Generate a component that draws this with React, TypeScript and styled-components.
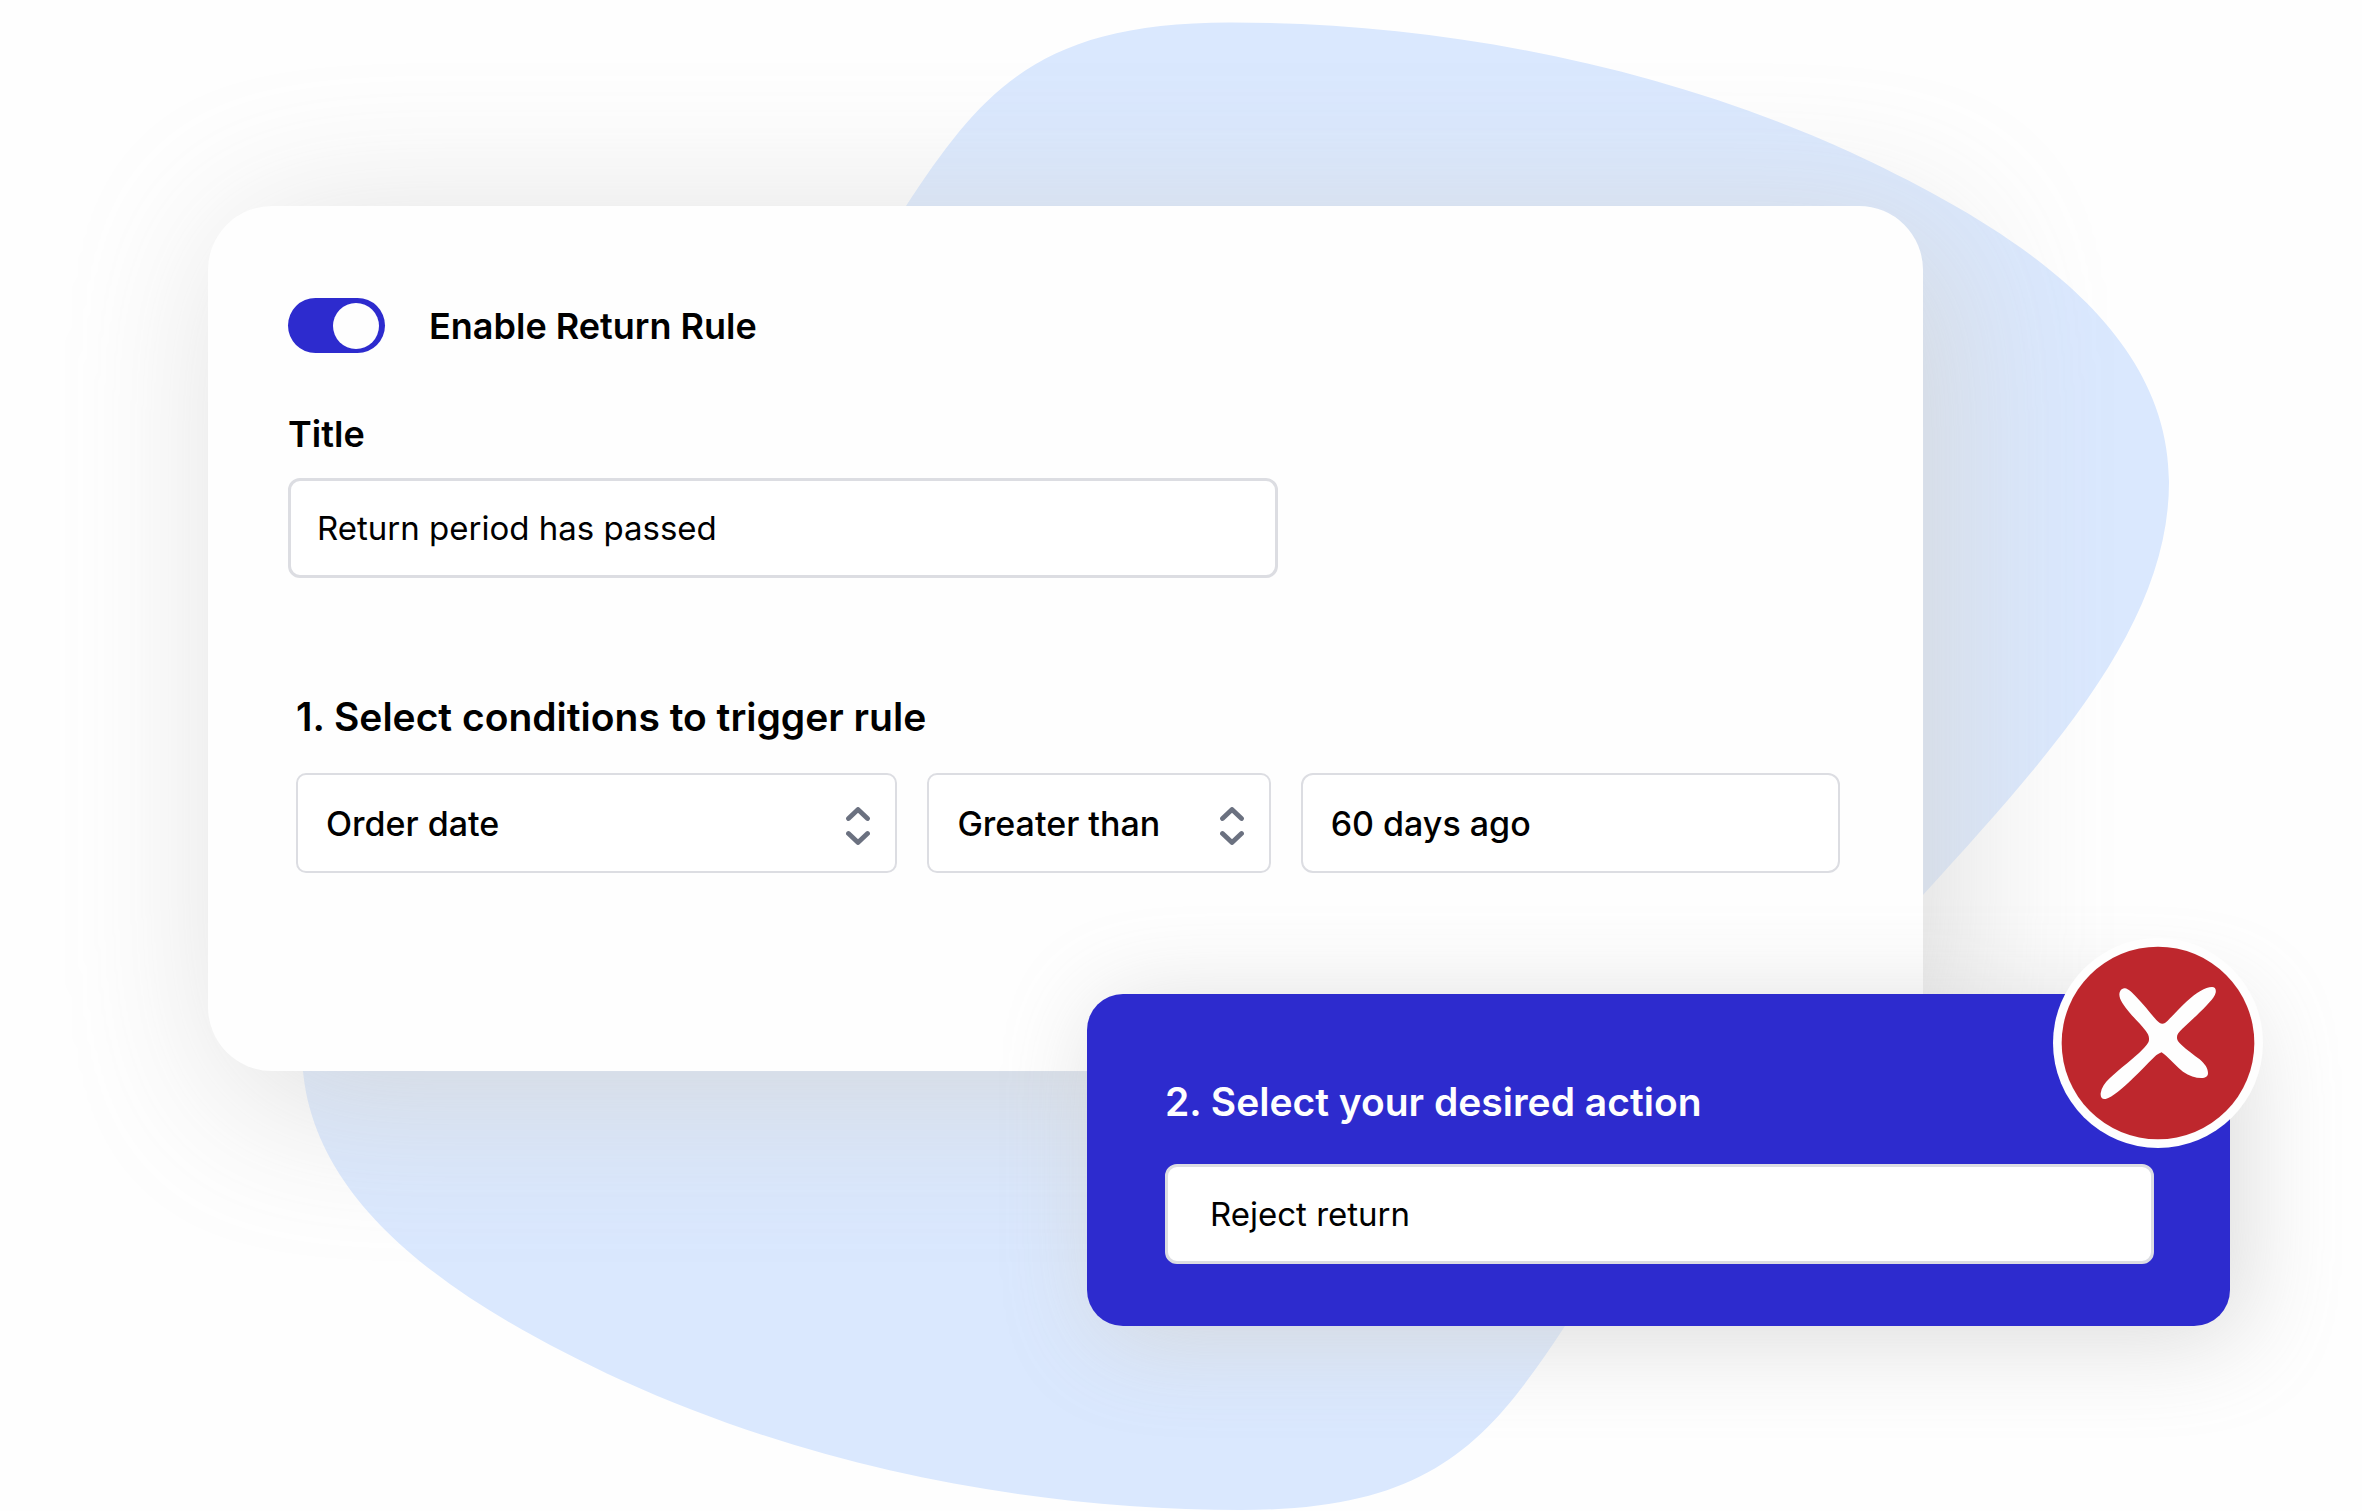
import React, { useId, useState } from "react";
import styled, { createGlobalStyle } from "styled-components";

const blue = "#2d2bce";
const line = "#dcdde2";
const shadow = "rgba(212, 212, 212, 0.82)";

const GlobalStyle = createGlobalStyle`
  *, *::before, *::after { box-sizing: border-box; }
  body {
    margin: 0;
    background: #fefefe;
    color: #000;
    font-family: Inter, "Liberation Sans", sans-serif;
  }
`;

const Page = styled.main`
  position: relative;
  min-height: 100vh;
  overflow: hidden;
  display: grid;
  grid-template-columns: minmax(0, 879fr) minmax(0, 836fr) minmax(0, 307fr);
  grid-template-rows: auto 77px auto;
  align-content: start;
  padding: 206px 132px 184px 208px;
`;

const Backdrop = styled.svg`
  position: absolute;
  inset: 0;
  width: 100%;
  height: 100%;
`;

const RuleCard = styled.section`
  position: relative;
  grid-area: 1 / 1 / 3 / 3;
  display: flex;
  flex-direction: column;
  padding: 92px 83px 198px 80px;
  border-radius: 64px;
  background: #fefefe;
  box-shadow: 24px 24px 160px ${shadow};
`;

const ActionCard = styled.section`
  position: relative;
  grid-area: 2 / 2 / 4 / 4;
  display: flex;
  flex-direction: column;
  gap: 38px;
  padding: 84px 76px 62px 78px;
  border-radius: 36px;
  background: ${blue};
  box-shadow: 12px 12px 96px ${shadow};
`;

const ToggleRow = styled.label`
  display: flex;
  align-items: center;
  gap: 44px;
  font-size: 36px;
  line-height: 44px;
  font-weight: 600;
`;

const Switch = styled.input`
  appearance: none;
  position: relative;
  width: 97px;
  height: 55px;
  margin: 0;
  border-radius: 28px;
  background: #c9ccd4;

  &::before {
    content: "";
    position: absolute;
    top: 5px;
    left: 5px;
    width: 46px;
    height: 46px;
    border-radius: 50%;
    background: #fefefe;
  }

  &:checked {
    background: ${blue};
  }

  &:checked::before {
    left: 45px;
  }
`;

const TitleField = styled.div`
  display: flex;
  flex-direction: column;
  gap: 22px;
  max-width: 990px;
  margin-top: 59px;
`;

const FieldLabel = styled.label`
  font-size: 36px;
  line-height: 44px;
  font-weight: 600;
`;

const TextInput = styled.input<{ $inset: number; $strong?: boolean; $border?: number }>`
  width: 100%;
  min-width: 0;
  height: 100px;
  padding: 0 ${(p) => p.$inset}px;
  border: ${(p) => p.$border ?? 2}px solid ${line};
  border-radius: 12px;
  background: #fff;
  color: #000;
  font-family: inherit;
  font-size: ${(p) => (p.$strong ? 34 : 33)}px;
  font-weight: ${(p) => (p.$strong ? 500 : 400)};
`;

const Conditions = styled.div`
  display: flex;
  flex-direction: column;
  gap: 32px;
  margin-top: 115px;
  padding-left: 8px;
`;

const Heading = styled.h2<{ $light?: boolean }>`
  margin: 0;
  font-size: 39px;
  line-height: 48px;
  font-weight: 600;
  color: ${(p) => (p.$light ? "#fefefe" : "#000")};
`;

const ConditionRow = styled.div`
  display: grid;
  grid-template-columns: minmax(0, 601fr) minmax(0, 343fr) minmax(0, 539fr);
  gap: 30px;
`;

const SelectBox = styled.div`
  position: relative;
`;

const Select = styled.select`
  appearance: none;
  width: 100%;
  height: 100px;
  padding: 0 72px 0 28px;
  border: 2px solid ${line};
  border-radius: 10px;
  background: #fff;
  color: #000;
  font-family: inherit;
  font-size: 34px;
  font-weight: 500;
`;

const Chevrons = styled.svg`
  position: absolute;
  top: 34px;
  right: 27px;
  width: 24px;
  height: 38px;
  pointer-events: none;
`;

const Badge = styled.svg`
  position: absolute;
  top: -56px;
  right: -33px;
  width: 210px;
  height: 210px;
`;

function ConditionSelect({ label, options }: { label: string; options: string[] }) {
  return (
    <SelectBox>
      <Select aria-label={label} defaultValue={options[0]}>
        {options.map((o) => (
          <option key={o}>{o}</option>
        ))}
      </Select>
      <Chevrons viewBox="0 0 24 38" fill="none" stroke="#6b7180" strokeWidth="4.8" strokeLinecap="round" strokeLinejoin="round" aria-hidden="true">
        <path d="M2.5 11.5 12 2.5l9.5 9" />
        <path d="M2.5 26.5l9.5 9 9.5-9" />
      </Chevrons>
    </SelectBox>
  );
}

function RejectBadge() {
  return (
    <Badge viewBox="0 0 630 630" role="img" aria-label="Rejected">
      <circle cx="315" cy="315" r="315" fill="#fefefe" />
      <circle cx="315" cy="315" r="289" fill="#be272d" />
      <path
        fill="#fefefe"
        d="M328 257C334 257 338 254 344 248C364 228 382 208 400 191C430 164 457 147 477 147C486 147 490 153 488 164C485 174 479 182 470 192C458 206 444 220 430 233L388 272C376 284 371 290 372 301C373 309 377 313 385 320C402 336 422 350 440 364C456 378 465 391 465 405C465 415 458 420 445 420C428 420 408 414 390 401C372 388 357 369 340 354C334 349 329 346 326 343C320 346 311 350 304 357C284 376 262 400 240 421C209 451 178 478 158 483C147 485 142 478 143 466C145 450 155 435 170 421C200 392 242 362 270 333C284 318 289 311 288 301C288 293 284 286 278 278C264 260 246 243 230 224C212 203 199 185 199 169C200 157 207 151 216 151C226 153 237 163 250 177C272 199 292 226 310 246C317 253 322 257 328 257Z"
      />
    </Badge>
  );
}

export default function App() {
  const [enabled, setEnabled] = useState(true);
  const titleId = useId();
  const actionId = useId();

  return (
    <>
      <GlobalStyle />
      <Page>
        <Backdrop viewBox="0 0 2362 1511" preserveAspectRatio="none" aria-hidden="true">
          <path
            fill="#dae8fe"
            d="M1230 22.5C1430 22.5 1650 61 1850 152C2000 222 2169 322 2169 482C2169 622 2058 747 1923 895C1790 1040 1640 1217 1565 1326C1488 1443 1431 1510 1241 1510C1041 1510 821 1471 621 1380C471 1310 302 1210 302 1050C302 910 413 785 548 637C681 492 831 315 906 206C983 89 1040 22.5 1230 22.5Z"
          />
        </Backdrop>

        <RuleCard>
          <ToggleRow>
            <Switch type="checkbox" role="switch" checked={enabled} onChange={(e) => setEnabled(e.target.checked)} />
            Enable Return Rule
          </ToggleRow>

          <TitleField>
            <FieldLabel htmlFor={titleId}>Title</FieldLabel>
            <TextInput id={titleId} $inset={26} $border={3} defaultValue="Return period has passed" />
          </TitleField>

          <Conditions>
            <Heading>1. Select conditions to trigger rule</Heading>
            <ConditionRow>
              <ConditionSelect label="Condition field" options={["Order date", "Order total"]} />
              <ConditionSelect label="Comparison" options={["Greater than", "Less than"]} />
              <TextInput aria-label="Condition value" $inset={28} $strong defaultValue="60 days ago" />
            </ConditionRow>
          </Conditions>
        </RuleCard>

        <ActionCard>
          <Heading $light>
            <label htmlFor={actionId}>2. Select your desired action</label>
          </Heading>
          <TextInput id={actionId} $inset={42} $border={3} defaultValue="Reject return" />
          <RejectBadge />
        </ActionCard>
      </Page>
    </>
  );
}
